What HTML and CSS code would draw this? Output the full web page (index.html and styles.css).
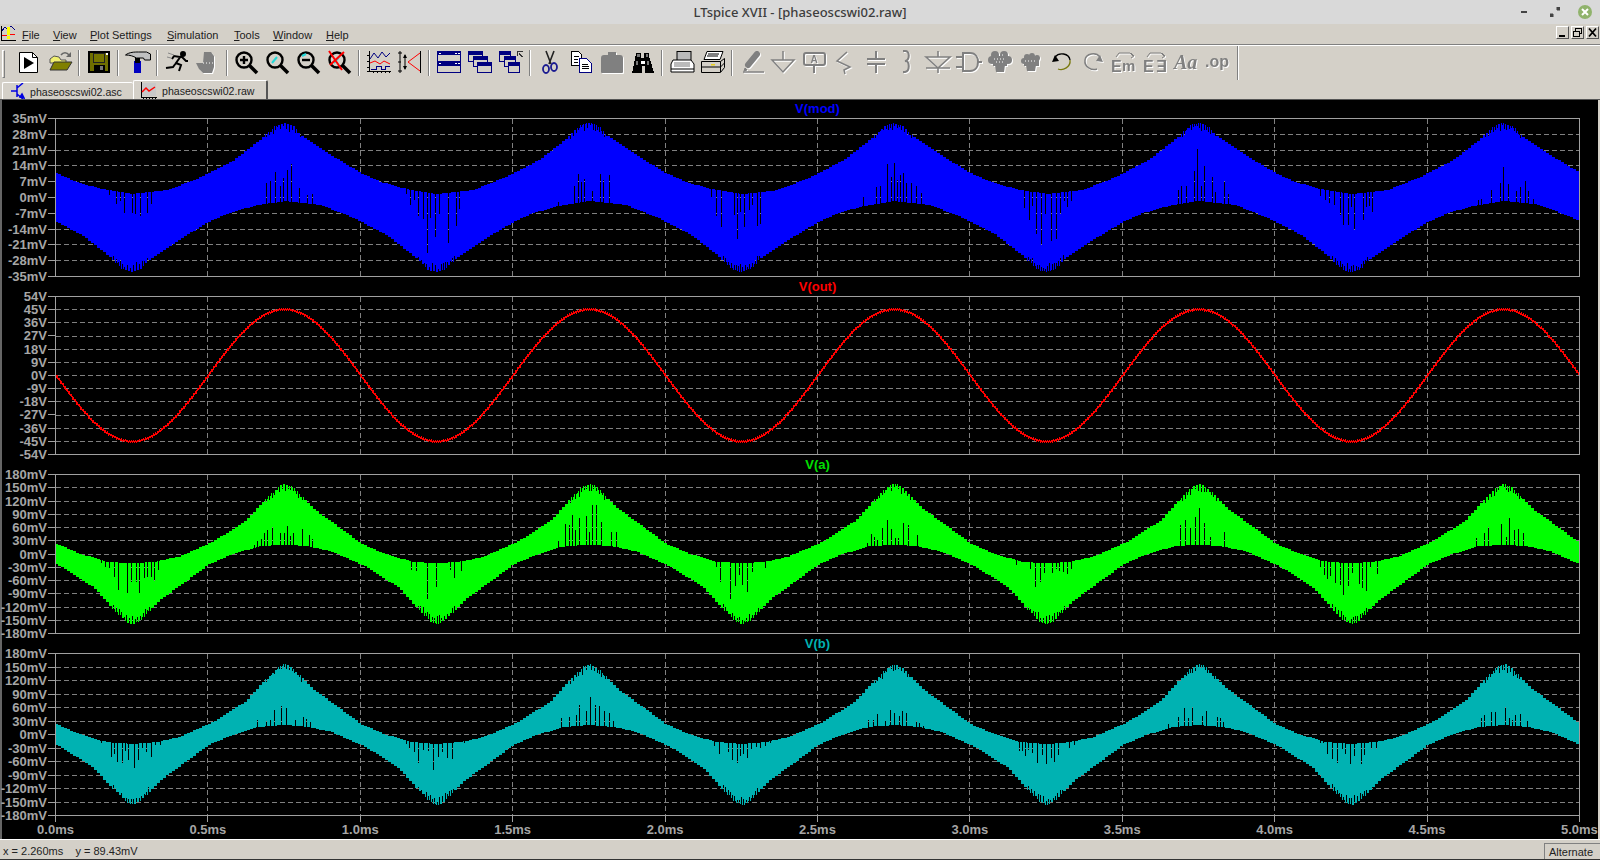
FILE: index.html
```html
<!DOCTYPE html>
<html lang="en">
<head>
<meta charset="utf-8">
<title>LTspice XVII - [phaseoscswi02.raw]</title>
<link rel="stylesheet" href="styles.css">
</head>
<body>
<div class="app">
  <header class="titlebar">
    <span></span>
    <span class="title">LTspice XVII - [phaseoscswi02.raw]</span>
    <div class="winctl">
      <span class="wc"><svg width="14" height="14" viewBox="0 0 14 14"><rect x="1" y="6" width="6" height="2" transform="translate(2 0)" fill="#444"/></svg></span>
      <span class="wc"><svg width="14" height="14" viewBox="0 0 14 14"><path d="M8 2h4v4l-1-1-1 1-2-2 1-1zM6 12H2V8l1 1 1-1 2 2-1 1z" fill="#444"/></svg></span>
      <span class="wc"><svg width="16" height="16" viewBox="0 0 16 16"><circle cx="8" cy="8" r="7" fill="#90b36c"/><path d="M5 5l6 6M11 5l-6 6" stroke="#fff" stroke-width="2"/></svg></span>
    </div>
  </header>

  <nav class="menubar">
    <svg class="appicon" width="17" height="17" viewBox="0 0 17 17" shape-rendering="crispEdges">
      <path d="M1 1v14h15" stroke="#000" fill="none"/>
      <path d="M1 15v1M4 15v1M7 15v1M10 15v1M13 15v1" stroke="#000"/>
      <path d="M2 6l3-4 3 3 3-4 4 4" stroke="#000080" fill="none"/>
      <path d="M2 10h5l2-1h6" stroke="#f00" fill="none"/>
      <rect x="7" y="2" width="3" height="8" fill="#ff0"/>
      <rect x="7" y="11" width="3" height="3" fill="#ff0"/>
    </svg>
    <div class="menus">
      <span><u>F</u>ile</span><span><u>V</u>iew</span><span><u>P</u>lot Settings</span><span><u>S</u>imulation</span><span><u>T</u>ools</span><span><u>W</u>indow</span><span><u>H</u>elp</span>
    </div>
    <div class="mdibtns">
      <span class="mdi"><svg width="11" height="11" viewBox="0 0 11 11" shape-rendering="crispEdges"><rect x="2" y="8" width="6" height="2" fill="#000"/></svg></span>
      <span class="mdi"><svg width="11" height="11" viewBox="0 0 11 11" shape-rendering="crispEdges" fill="none" stroke="#000"><rect x="3.5" y="1.5" width="6" height="5"/><rect x="1.5" y="4.5" width="6" height="5" fill="#d4d0c8"/></svg></span>
      <span class="mdi"><svg width="11" height="11" viewBox="0 0 11 11"><path d="M2 1.5l7 8M9 1.5l-7 8" stroke="#000" stroke-width="1.8"/></svg></span>
    </div>
  </nav>

  <div class="toolbar">
    <span class="grip"></span>
    <span class="btn"><svg class="ic" viewBox="0 0 26 24"><path d="M3.500 2.500h13l5 5v15h-18z" fill="#fff" stroke="#000"/><path d="M16.500 2.500v5h5" fill="none" stroke="#000"/><path d="M8 7l10 6-10 6z" fill="#000"/></svg></span>
    <span class="btn"><svg class="ic" viewBox="0 0 26 24"><path d="M3 9l4-3 5 1 2 3h5v3H3z" fill="#f0f070" stroke="#555"/><path d="M3 20l4-8h18l-5 8z" fill="#808000" stroke="#333"/><path d="M14 5c2-3 6-3 8 0" fill="none" stroke="#666" stroke-width="1.500"/><path d="M24 2v5h-5z" fill="#666"/></svg></span>
    <i class="sep"></i>
    <span class="btn"><svg class="ic" viewBox="0 0 26 24" shape-rendering="crispEdges"><rect x="3" y="2" width="20" height="20" fill="#6e6e00" stroke="#000" stroke-width="2"/><rect x="7.500" y="3" width="11" height="9" fill="#767600" stroke="#222"/><rect x="20" y="3" width="2" height="2" fill="#fff"/><rect x="8" y="15" width="11" height="6" fill="#000"/><rect x="14" y="16" width="3" height="4" fill="#777"/></svg></span>
    <i class="sep"></i>
    <span class="btn"><svg class="ic" viewBox="0 0 26 24"><rect x="9" y="11" width="7" height="12" fill="#0000c0"/><rect x="10" y="8" width="5" height="5" fill="#000"/><path d="M.5 5c4-3 9-3 13-3h8l4 2v6h-6l-1-2h-7C8 6 5 5 .5 5z" fill="#c0c0c0" stroke="#000"/></svg></span>
    <i class="sep"></i>
    <span class="btn"><svg class="ic" viewBox="0 0 26 24" fill="none" stroke="#000" stroke-width="2"><circle cx="19" cy="4" r="2" fill="#000"/><path d="M17 6l-5 7 5 2-2 6M12 13l-3 4-7 1M17 6l5 5h2M16 7l-6-1-2 3"/><path d="M4 3l6 2M3 7l4 1" stroke="#888" stroke-width="1"/></svg></span>
    <span class="btn"><svg class="ic dis" viewBox="0 0 26 24"><path d="M9 2h7l3 4v11l-2 6H8l-4-4-3-6h7z" fill="#808080"/><path d="M8 13h10" stroke="#fff" stroke-dasharray="1 2"/></svg></span>
    <i class="sep"></i>
    <span class="btn"><svg class="ic" viewBox="0 0 26 24" fill="none" stroke="#000"><circle cx="10" cy="10" r="7.500" stroke-width="2.400"/><path d="M15.500 15.500L23 23" stroke-width="3.500"/><path d="M6 10h8M10 6v8" stroke-width="2.400"/></svg></span>
    <span class="btn"><svg class="ic" viewBox="0 0 26 24" fill="none" stroke="#000"><circle cx="10" cy="10" r="7.500" stroke-width="2.400"/><path d="M15.500 15.500L23 23" stroke-width="3.500"/><path d="M7 13l5-6" stroke="#20d8d8" stroke-width="2"/></svg></span>
    <span class="btn"><svg class="ic" viewBox="0 0 26 24" fill="none" stroke="#000"><circle cx="10" cy="10" r="7.500" stroke-width="2.400"/><path d="M15.500 15.500L23 23" stroke-width="3.500"/><path d="M6 10h8" stroke-width="2.400"/><path d="M6 6l4-2" stroke="#20d8d8" stroke-width="2"/></svg></span>
    <span class="btn"><svg class="ic" viewBox="0 0 26 24" fill="none" stroke="#000"><circle cx="10" cy="10" r="7.500" stroke-width="2.400"/><path d="M15.500 15.500L23 23" stroke-width="3.500"/><path d="M7 13l5-6" stroke="#20d8d8" stroke-width="2"/><path d="M2 1l13 19M17 2L3 15" stroke="#f00" stroke-width="2"/></svg></span>
    <i class="sep"></i>
    <span class="btn"><svg class="ic" viewBox="0 0 26 24" fill="none" shape-rendering="crispEdges"><path d="M3 1v21M1 21h24M7 21v2M11 21v2M15 21v2M19 21v2M23 21v2M1 5h2M1 11h2M1 17h2" stroke="#000"/><path d="M4 9l4-6 4 5 4-6 4 5 4-4" stroke="#000080" shape-rendering="auto"/><path d="M4 13l5-2 5 3 4-3 6 3" stroke="#f00" shape-rendering="auto"/><path d="M5 19h5v-3h5v3h4v-3h5" stroke="#000080"/></svg></span>
    <span class="btn"><svg class="ic" viewBox="0 0 26 24" fill="none"><path d="M3 1v22M1 3h4M1 21h4M1 12h3M23.500 1v22" stroke="#000"/><path d="M8 5v14" stroke="#000"/><path d="M6 8l2-4 2 4zM6 16l2 4 2-4z" fill="#000"/><path d="M11 12L23 3M11 12l12 9" stroke="#f00"/></svg></span>
    <i class="sep"></i>
    <span class="btn"><svg class="ic" viewBox="0 0 26 24" shape-rendering="crispEdges"><rect x="1.500" y="1.500" width="23" height="21" fill="none" stroke="#000080"/><rect x="1" y="1" width="24" height="4" fill="#000080"/><rect x="1" y="11" width="24" height="5" fill="#000080"/><path d="M3 3h2M19 3h2M22 3h2M3 13h2M19 13h2M22 13h2" stroke="#fff"/></svg></span>
    <span class="btn"><svg class="ic" viewBox="0 0 26 24" shape-rendering="crispEdges"><g fill="#d4d0c8" stroke="#000080"><rect x="1.500" y="1.500" width="14" height="10"/><rect x="6.500" y="6.500" width="14" height="10"/><rect x="10.500" y="12.500" width="14" height="10"/></g><rect x="1" y="1" width="15" height="4" fill="#000080"/><rect x="6" y="6" width="15" height="4" fill="#000080"/><rect x="10" y="12" width="15" height="4" fill="#000080"/></svg></span>
    <span class="btn"><svg class="ic" viewBox="0 0 26 24" shape-rendering="crispEdges"><g fill="#d4d0c8" stroke="#000080"><rect x="1.500" y="1.500" width="11" height="10"/><rect x="6.500" y="6.500" width="11" height="10"/><rect x="10.500" y="12.500" width="11" height="10"/></g><rect x="1" y="1" width="12" height="4" fill="#000080"/><rect x="6" y="6" width="12" height="4" fill="#000080"/><rect x="10" y="12" width="12" height="4" fill="#000080"/><path d="M19 1h6v1h-5v4h-1zM21 3h1v1h1v1h1v1h1v1h-2v-1h-1v-1h-1z" fill="#333"/></svg></span>
    <i class="sep"></i>
    <span class="btn"><svg class="ic" viewBox="0 0 26 24" fill="none"><path d="M9 1l5 13M17 1l-5 13" stroke="#222" stroke-width="1.600"/><ellipse cx="9" cy="19" rx="3" ry="4" stroke="#1a1a90" stroke-width="1.800"/><ellipse cx="17" cy="17" rx="3" ry="4" stroke="#1a1a90" stroke-width="1.800"/></svg></span>
    <span class="btn"><svg class="ic" viewBox="0 0 26 24" shape-rendering="crispEdges"><path d="M3.500 1.500h7l3 3v11h-10z" fill="#fff" stroke="#000"/><path d="M11.500 8.500h7l5 5v9h-12z" fill="#fff" stroke="#000080"/><path d="M6 6h5M6 9h4M6 12h4M14 14h6M14 16h7M14 18h7" stroke="#000"/></svg></span>
    <span class="btn"><svg class="ic dis" viewBox="0 0 26 24"><path d="M2 8q0-3 3-3h4V2h8v3h4q3 0 3 3v14q0 1-1 1H3q-1 0-1-1z" fill="#808080"/></svg></span>
    <span class="btn"><svg class="ic" viewBox="0 0 26 24" shape-rendering="crispEdges"><path d="M6 3h5v5h3V3h5v5l1 1 4 14H15v-7h-3v7H2l3-14z" fill="#000"/><path d="M7 4h3v3H7zM16 4h2v3h-2zM6 11h2v4H6zM17 11h2v4h-2z" fill="#777"/><path d="M11 11h4v3h-4z" fill="#fff"/></svg></span>
    <i class="sep"></i>
    <span class="btn"><svg class="ic" viewBox="0 0 26 24"><rect x="8" y="1.500" width="14" height="10" fill="#bbb" stroke="#000"/><path d="M4 10h18l3 4v8H2v-8z" fill="#fff" stroke="#000"/><rect x="5" y="12" width="16" height="5" fill="#bbb"/><path d="M2 19h23" stroke="#000"/></svg></span>
    <span class="btn"><svg class="ic" viewBox="0 0 26 24" shape-rendering="auto"><path d="M7 1.500h16l-3 8H4z" fill="#fff" stroke="#000"/><path d="M8 4h11M7 6h11" stroke="#000"/><path d="M1.500 11.500h19l4-3v9l-4 5h-19z" fill="#d4d0c8" stroke="#000"/><path d="M1.500 17h19v5M20.500 11.500V17l4-4" fill="none" stroke="#000"/><rect x="11" y="14" width="4" height="1.500" fill="#e8d020"/></svg></span>
    <i class="sep"></i>
    <span class="btn"><svg class="ic dis" viewBox="0 0 26 24" fill="none" stroke="#808080"><path d="M18 4L9 15" stroke-width="6" stroke-linecap="round"/><path d="M6 18l-1 3 3-1z" fill="#808080"/><path d="M4 22h21" stroke-width="1.500"/></svg></span>
    <span class="btn"><svg class="ic dis" viewBox="0 0 26 24" fill="none" stroke="#808080" stroke-width="1.500"><path d="M13 1v9M2 10h22L13 22z"/></svg></span>
    <span class="btn"><svg class="ic dis" viewBox="0 0 26 24" fill="none" stroke="#808080" stroke-width="2"><rect x="3" y="3" width="21" height="12" rx="2"/><path d="M13 15v8"/><text class="icontxt" x="13" y="13" font-size="10" text-anchor="middle" fill="#808080" stroke="none">A</text></svg></span>
    <span class="btn"><svg class="ic dis" viewBox="0 0 26 24" fill="none" stroke="#808080" stroke-width="1.500"><path d="M15 2L5 11l13 6-6 3 1 4"/></svg></span>
    <span class="btn"><svg class="ic dis" viewBox="0 0 26 24" fill="none" stroke="#808080" stroke-width="2"><path d="M13 1v8M4 9h18M4 14h18M13 14v9"/></svg></span>
    <span class="btn"><svg class="ic dis" viewBox="0 0 26 24" fill="none" stroke="#808080" stroke-width="2"><path d="M9 1h2c5 0 5 9 0 10c5 0 5 10 0 11H9"/></svg></span>
    <span class="btn"><svg class="ic dis" viewBox="0 0 26 24" fill="none" stroke="#808080" stroke-width="1.600"><path d="M13 1v6M1 7h24L13 18zM1 18h24M13 18v5"/></svg></span>
    <span class="btn"><svg class="ic dis" viewBox="0 0 26 24" fill="none" stroke="#808080" stroke-width="2"><path d="M7 3h7c6 0 8 5 8 9s-2 9-8 9H7zM0 7h6M0 17h6M22 12h4"/></svg></span>
    <span class="btn"><svg class="ic dis" viewBox="0 0 26 24"><g fill="#808080"><circle cx="8" cy="5" r="4"/><circle cx="17" cy="5" r="4"/><circle cx="5" cy="10" r="4"/><circle cx="21" cy="10" r="4"/><rect x="6" y="6" width="14" height="10"/><path d="M8 15h10l-1 7H9z"/></g><path d="M7 9h12M9 12h9M12 5h6" stroke="#fff" stroke-dasharray="1 2"/></svg></span>
    <span class="btn"><svg class="ic dis" viewBox="0 0 26 24"><g fill="#808080"><circle cx="9" cy="7" r="3"/><circle cx="14" cy="6" r="3"/><circle cx="19" cy="8" r="3"/><circle cx="6" cy="11" r="3"/><rect x="6" y="7" width="15" height="9"/><path d="M8 15h10l-1 6H9z"/></g><path d="M7 11h12" stroke="#fff" stroke-dasharray="1 2"/></svg></span>
    <span class="btn"><svg class="ic" viewBox="0 0 26 24" fill="none"><path d="M6 7c4-5 14-4 15 3" stroke="#000" stroke-width="1.300"/><path d="M21 10c1 7-7 11-12 9" stroke="#7a7a10" stroke-width="1.300"/><path d="M3 12l7-1-4-6z" fill="#000"/></svg></span>
    <span class="btn"><svg class="ic dis" viewBox="0 0 26 24" fill="none"><path d="M20 7C16 2 6 3 5 10c-1 7 7 11 12 9" stroke="#808080" stroke-width="1.500"/><path d="M23 12l-7-1 4-6z" fill="#808080"/></svg></span>
    <span class="btn"><svg class="ic dis" viewBox="0 0 26 24" fill="none" stroke="#808080"><path d="M5 7l3-4h11l3 3M20 3l3 3-3 2" stroke-width="1"/><text class="icontxt" x="0" y="22" font-size="16" fill="#808080" stroke="none">E</text><text class="icontxt" x="11" y="21" font-size="15" fill="#808080" stroke="none">m</text></svg></span>
    <span class="btn"><svg class="ic dis" viewBox="0 0 26 24" fill="none" stroke="#808080"><path d="M5 7l3-4h11l3 3M20 3l3 3-3 2" stroke-width="1"/><text class="icontxt" x="1" y="22" font-size="16" fill="#808080" stroke="none">E</text><text class="icontxt" transform="translate(26 0) scale(-1 1)" x="1" y="22" font-size="16" fill="#808080" stroke="none">E</text></svg></span>
    <span class="btn"><svg class="ic dis" viewBox="0 0 26 24"><text class="icontxt-serif" x="1" y="19" font-size="20" fill="#808080">Aa</text></svg></span>
    <span class="btn"><svg class="ic dis" viewBox="0 0 26 24"><text class="icontxt" x="1" y="17" font-size="16" fill="#808080">.op</text></svg></span>
    <i class="sep tall"></i>
  </div>

  <div class="tabs">
    <span class="tab">
      <svg width="14" height="16" viewBox="0 0 14 16" fill="none" stroke="#0000e0" stroke-width="1.500"><path d="M0 8h6M6 2v12M6 5l6-5M6 11l6 5"/><path d="M13 15l-4-1 2-3z" fill="#0000e0"/></svg>
      <span class="tabtxt">phaseoscswi02.asc</span>
    </span>
    <span class="tab active">
      <svg width="17" height="17" viewBox="0 0 17 17" fill="none" shape-rendering="crispEdges"><rect x="1" y="1" width="15" height="13" fill="#c8c8c8"/><path d="M1 0v15h16M3 15v2M6 15v2M9 15v2M12 15v2M15 15v2" stroke="#000"/><path d="M2 10l4-4 3 3 6-4" stroke="#f00" stroke-width="1.500" shape-rendering="auto"/></svg>
      <span class="tabtxt">phaseoscswi02.raw</span>
    </span>
  </div>

  <main class="plotwin">
    <section class="pane">
      <div class="ptitle t-blue">V(mod)</div>
      <div class="pbody">
        <div class="yaxis"><span>35mV</span><span>28mV</span><span>21mV</span><span>14mV</span><span>7mV</span><span>0mV</span><span>-7mV</span><span>-14mV</span><span>-21mV</span><span>-28mV</span><span>-35mV</span></div>
        <canvas class="plot" width="1525" height="159" data-trace="blue" data-lines="11"></canvas>
      </div>
    </section>
    <section class="pane">
      <div class="ptitle t-red">V(out)</div>
      <div class="pbody">
        <div class="yaxis"><span>54V</span><span>45V</span><span>36V</span><span>27V</span><span>18V</span><span>9V</span><span>0V</span><span>-9V</span><span>-18V</span><span>-27V</span><span>-36V</span><span>-45V</span><span>-54V</span></div>
        <canvas class="plot" width="1525" height="159" data-trace="red" data-lines="13"></canvas>
      </div>
    </section>
    <section class="pane">
      <div class="ptitle t-green">V(a)</div>
      <div class="pbody">
        <div class="yaxis"><span>180mV</span><span>150mV</span><span>120mV</span><span>90mV</span><span>60mV</span><span>30mV</span><span>0mV</span><span>-30mV</span><span>-60mV</span><span>-90mV</span><span>-120mV</span><span>-150mV</span><span>-180mV</span></div>
        <canvas class="plot" width="1525" height="160" data-trace="green" data-lines="13"></canvas>
      </div>
    </section>
    <section class="pane">
      <div class="ptitle t-teal">V(b)</div>
      <div class="pbody">
        <div class="yaxis"><span>180mV</span><span>150mV</span><span>120mV</span><span>90mV</span><span>60mV</span><span>30mV</span><span>0mV</span><span>-30mV</span><span>-60mV</span><span>-90mV</span><span>-120mV</span><span>-150mV</span><span>-180mV</span></div>
        <canvas class="plot" width="1525" height="163" data-trace="teal" data-lines="13"></canvas>
      </div>
    </section>
    <div class="xaxis">
      <span>0.0ms</span><span>0.5ms</span><span>1.0ms</span><span>1.5ms</span><span>2.0ms</span><span>2.5ms</span><span>3.0ms</span><span>3.5ms</span><span>4.0ms</span><span>4.5ms</span><span>5.0ms</span>
    </div>
  </main>

  <footer class="status">
    <span class="coords">x = 2.260ms    y = 89.43mV</span>
    <span class="mode">Alternate</span>
  </footer>
</div>
<script src="waves.js"></script>
</body>
</html>
```

FILE: styles.css
```css
* { box-sizing: border-box; }
html, body { margin: 0; height: 100%; overflow: hidden; }
body { font-family: "Liberation Sans", Arial, sans-serif; font-size: 11px; color: #111; background: #d4d0c8; }
.app { width: 1600px; height: 860px; display: flex; flex-direction: column; }

.titlebar { height: 24px; flex: none; background: #d9d9d9; display: grid; grid-template-columns: 1fr auto 1fr; align-items: center; }
.title { font-family: "Noto Sans", sans-serif; font-size: 13px; font-weight: 500; color: #3d3d3d; }
.winctl { display: flex; justify-content: flex-end; }
.wc { width: 30px; height: 24px; display: flex; align-items: center; justify-content: center; }

.menubar { height: 21px; flex: none; display: flex; align-items: flex-start; border-bottom: 1px solid #808080; box-shadow: 0 1px 0 #fff; position: relative; z-index: 1; }
.appicon { flex: none; margin-top: 1px; }
.menus { margin-left: 5px; display: grid; grid-template-columns: 31px 37px 77px 67px 39px 53px auto; line-height: 19px; padding-top: 2px; color: #1c1c1c; }
.menus u { text-underline-offset: 1px; }
.mdibtns { margin-left: auto; display: flex; gap: 2px; padding: 2px 1px 0 0; }
.mdi { width: 13px; height: 13px; background: #d4d0c8; border: 1px solid; border-color: #fff #555 #555 #fff; display: flex; }

.toolbar { height: 35px; flex: none; display: flex; align-items: flex-start; padding: 5px 0 0 2px; }
.grip { width: 3px; height: 28px; margin-right: 8px; border: 1px solid; border-color: #fff #808080 #808080 #fff; }
.btn { width: 31px; height: 24px; flex: none; display: flex; justify-content: center; }
.ic { width: 26px; height: 24px; overflow: visible; }
.dis { filter: drop-shadow(1px 1px 0 #fff); }
.sep { width: 2px; height: 26px; margin: 0 3px; flex: none; border-left: 1px solid #808080; border-right: 1px solid #fff; }
.sep.tall { height: 35px; margin-top: -5px; margin-left: 5px; }
.icontxt { font-family: "Liberation Sans", sans-serif; font-weight: 700; }
.icontxt-serif { font-family: "Liberation Serif", serif; font-weight: 700; font-style: italic; }

.tabs { height: 20px; flex: none; display: flex; align-items: flex-end; padding-left: 2px; border-bottom: 1px solid #555; color: #222; font-size: 10.6px; }
.tab { height: 17px; width: 131px; display: flex; align-items: center; gap: 5px; padding-left: 8px; border-top: 1px solid #fff; border-left: 1px solid #fff; border-radius: 2px 2px 0 0; }
.tab.active { height: 19px; width: 135px; gap: 5px; padding-left: 6px; border-right: 2px solid #555; background: #d4d0c8; }
.tabtxt { padding-top: 2px; }

.plotwin { flex: 1; min-height: 0; background: #000; border-left: 2px solid #666; border-right: 2px solid #d4d0c8; }
.ptitle { margin-left: 53px; width: 1525px; height: 19px; line-height: 19px; text-align: center; font-weight: 700; font-size: 13px; }
.pane:first-child .ptitle { height: 18px; line-height: 18px; }
.t-blue { color: #0000ff; }
.t-red { color: #ff0000; }
.t-green { color: #00e000; }
.t-teal { color: #00b2b2; }
.pbody { display: flex; }
.yaxis { width: 53px; flex: none; display: flex; flex-direction: column; justify-content: space-between; }
.yaxis span, .xaxis span { font-weight: 700; font-size: 13px; color: #a6a6a6; white-space: nowrap; }
.yaxis span { height: 1px; display: flex; align-items: center; justify-content: flex-end; }
.yaxis span::after { content: ""; width: 7px; height: 1px; margin-left: 1px; background: #a0a0a0; flex: none; }
.plot { display: block; flex: none; }
.xaxis { margin-left: 53px; width: 1525px; height: 23px; display: flex; justify-content: space-between; }
.xaxis span { width: 1px; display: flex; flex-direction: column; align-items: center; line-height: 15px; }
.xaxis span::before { content: ""; width: 1px; height: 6px; background: #a0a0a0; flex: none; }

.status { height: 21px; flex: none; display: flex; justify-content: space-between; border-top: 1px solid #fff; border-bottom: 1px solid #333; color: #222; line-height: 19px; }
.coords { padding: 2px 0 0 3px; white-space: pre; }
.mode { width: 56px; margin-top: 3px; padding-left: 4px; line-height: 17px; border-top: 1px solid #808080; border-left: 1px solid #808080; }
```

FILE: waves.js
```js
(function () {
  var P = 304.8;
  // Envelope of the upper edge: [phase in px, offset in px above centre]
  var BLUE = [[0,24],[20,15],[45,8],[76,3],[112,7],[145,20],[178,37],[205,58],[220,72],[228,74],[237,71],[245,62],[278,40],[304.8,24]];
  var GREEN = [[0,10],[23,0],[50,-8],[76,-10],[100,-8],[123,-3],[157,12],[190,33],[207,52],[222,67],[229,70],[236,66],[257,45],[290,21],[304.8,10]];
  var CONF = {
    blue: { color: '#0000ff', table: BLUE, len: 55, peaks: [0.8, 0.8, 0.7, 1.1, 0.7], troughs: [0.7, 1.2, 1.1, 1, 0.7], seed: 11 },
    green: { color: '#00ff00', table: GREEN, len: 43, peaks: [0.6, 1, 0.7, 0.9, 0.8], troughs: [0.8, 1, 1, 0.7, 0.9], seed: 29 },
    teal: { color: '#00b2b2', table: GREEN, len: 28, peaks: [0.9, 1, 0.6, 1, 0.8], troughs: [0.9, 1, 0.8, 0.9, 1], seed: 47 }
  };

  function rng(a) {
    return function () {
      a = (a + 0x6D2B79F5) | 0;
      var t = Math.imul(a ^ (a >>> 15), 1 | a);
      t = (t + Math.imul(t ^ (t >>> 7), 61 | t)) ^ t;
      return ((t ^ (t >>> 14)) >>> 0) / 4294967296;
    };
  }

  function env(table, x) {
    var p = ((x % P) + P) % P;
    for (var i = 1; i < table.length; i++) {
      if (p <= table[i][0]) {
        var a = table[i - 1], b = table[i];
        return a[1] + (b[1] - a[1]) * (p - a[0]) / (b[0] - a[0]);
      }
    }
    return table[0][1];
  }

  function drawEnvelope(ctx, w, h, c) {
    var cy = (h - 1) / 2, r = rng(c.seed), x;
    var tops = [], bots = [];
    ctx.fillStyle = c.color;
    for (x = 0; x < w; x++) {
      var q = Math.floor(x / 3) * 3;
      tops[x] = Math.round(cy - env(c.table, q));
      bots[x] = Math.round(cy - (-env(c.table, q + P / 2)));
      ctx.fillRect(x, tops[x], 1, bots[x] - tops[x] + 1);
    }
    function hole(x, y0, y1) {
      x = Math.round(x);
      if (x < 0 || x >= w) return;
      ctx.clearRect(x, y0, 1, y1 - y0);
    }
    for (var k = 0; k < 5; k++) {
      var xp = 228.6 + P * k, xt = 76.2 + P * k, d, px, len;
      var span = 30;
      // dropouts rising from the lower edge near a peak
      for (d = -span; d <= span; d += 3 + Math.floor(r() * 3)) {
        var wgt = 1 - Math.pow(Math.abs(d) / (span + 4), 2);
        if (r() > 0.3 + 0.5 * wgt) continue;
        px = Math.round(xp + d);
        if (px < 0 || px >= w) continue;
        len = c.len * c.peaks[k] * wgt * (0.2 + 0.8 * r());
        hole(px, bots[px] - len, bots[px] + 1);
      }
      // dropouts falling from the upper edge near a trough
      for (d = -span; d <= span; d += 3 + Math.floor(r() * 3)) {
        var wgt2 = 1 - Math.pow(Math.abs(d) / (span + 4), 2);
        if (r() > 0.3 + 0.5 * wgt2) continue;
        px = Math.round(xt + d);
        if (px < 0 || px >= w) continue;
        len = c.len * c.troughs[k] * wgt2 * (0.2 + 0.8 * r());
        hole(px, tops[px], tops[px] + len);
      }
      // combed tips of the peak and the trough
      for (d = -18; d <= 18; d += 2 + Math.floor(r() * 2)) {
        var depth = 2 + r() * 6 * (1 - Math.abs(d) / 24);
        px = Math.round(xp + d);
        if (px >= 0 && px < w) hole(px, tops[px], tops[px] + depth);
        px = Math.round(xt + d);
        if (px >= 0 && px < w) hole(px, bots[px] - depth, bots[px] + 1);
      }
    }
  }

  function drawSine(ctx, w, h) {
    var cy = (h - 1) / 2, x, prev = null;
    ctx.fillStyle = '#ff0000';
    function val(x) { return cy + 66 * Math.sin(2 * Math.PI * x / P); }
    for (x = 0; x < w; x++) {
      var y = val(x);
      var up = (x % 2 === 0) ? 1 : 0, dn = (x % 4 === 1) ? 1 : 0;
      var a = Math.round(Math.min(y, prev === null ? y : prev)) - up;
      var b = Math.round(Math.max(y, prev === null ? y : prev)) + dn;
      ctx.fillRect(x, a, 1, Math.max(b - a + 1, 2));
      prev = y;
    }
  }

  function dashed(ctx, x0, y0, x1, y1) {
    var on = 5, off = 3, p;
    if (y0 === y1) { for (p = x0; p < x1; p += on + off) ctx.fillRect(p, y0, Math.min(on, x1 - p), 1); }
    else { for (p = y0; p < y1; p += on + off) ctx.fillRect(x0, p, 1, Math.min(on, y1 - p)); }
  }

  var canvases = document.querySelectorAll('canvas.plot');
  Array.prototype.forEach.call(canvases, function (cv) {
    var ctx = cv.getContext('2d'), w = cv.width, h = cv.height;
    var kind = cv.dataset.trace, lines = +cv.dataset.lines, i;
    if (kind === 'red') drawSine(ctx, w, h); else drawEnvelope(ctx, w, h, CONF[kind]);

    // grid goes underneath the trace
    ctx.globalCompositeOperation = 'destination-over';
    ctx.fillStyle = '#808080';
    for (i = 1; i < lines - 1; i++) dashed(ctx, 1, Math.round(i * (h - 1) / (lines - 1)), w - 1, Math.round(i * (h - 1) / (lines - 1)));
    for (i = 1; i < 10; i++) dashed(ctx, Math.round(i * 152.4), 1, Math.round(i * 152.4), h - 1);

    ctx.globalCompositeOperation = 'source-over';
    ctx.fillStyle = '#a0a0a0';
    ctx.fillRect(0, 0, w, 1);
    ctx.fillRect(0, h - 1, w, 1);
    ctx.fillRect(0, 0, 1, h);
    ctx.fillRect(w - 1, 0, 1, h);
  });
})();
```
